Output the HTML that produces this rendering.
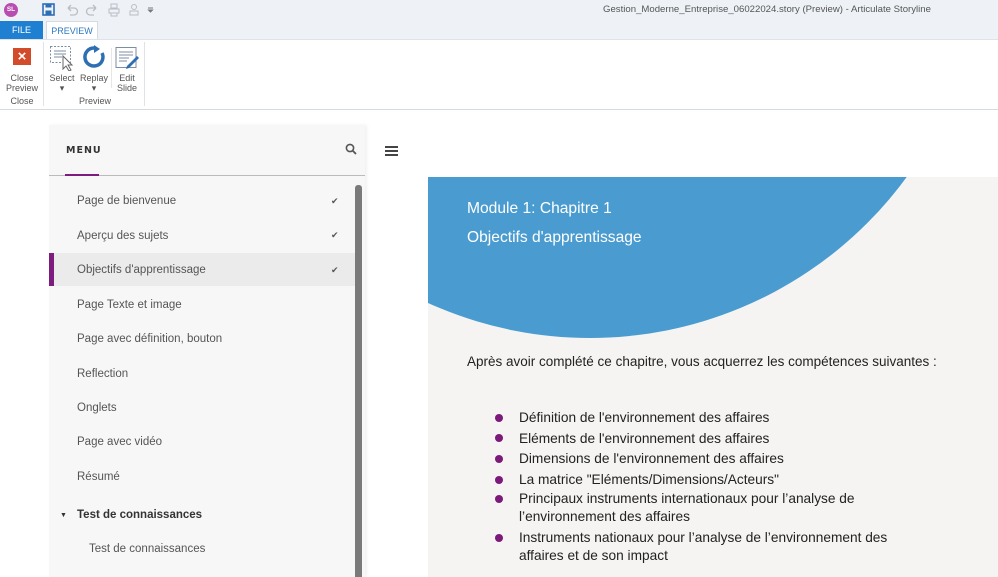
<!DOCTYPE html>
<html><head><meta charset="utf-8">
<style>
*{margin:0;padding:0;box-sizing:border-box}
body{width:998px;height:577px;overflow:hidden;background:#fff;font-family:"Liberation Sans",sans-serif;position:relative}
.a{position:absolute}
.title{left:0;top:0;width:998px;height:20px;background:#eef2f6}
.tabs{left:0;top:20px;width:998px;height:19px;background:#eef2f6}
.rib{left:0;top:39px;width:998px;height:71px;background:#fff;border-top:1px solid #dde3ea;border-bottom:1px solid #d6dbe0}
.rt{font-size:9px;color:#555;text-align:center;line-height:10px}
.mi{position:absolute;left:77px;font-size:11.5px;color:#555;font-family:"Liberation Sans",sans-serif;margin-top:2px}
.ck{position:absolute;left:331px;font-size:9px;color:#555;margin-top:1px}
.bl{position:absolute;left:519px;font-size:13.7px;color:#222;line-height:18px;margin-top:1px}
.dot{position:absolute;left:495px;width:8px;height:8px;border-radius:50%;background:#7b1a7b;margin-top:1px}
</style></head><body>
<div class="a title"></div>
<div class="a" style="left:4px;top:3px;width:14px;height:14px;border-radius:50%;background:#b84fb0;color:#fff;font-size:6.5px;line-height:14px;text-align:center;font-weight:bold">SL</div>
<svg class="a" style="left:42px;top:3px" width="115" height="14">
<rect x="1" y="1" width="11" height="11" fill="none" stroke="#2c6fb5" stroke-width="1.6"/><rect x="3.5" y="1" width="6" height="3.5" fill="#2c6fb5"/><rect x="3.5" y="7.5" width="6" height="4" fill="#2c6fb5"/>
<path d="M26 5 h6 a3.5 3.5 0 0 1 0 7 h-4 M26 5 l3-3 M26 5 l3 3" fill="none" stroke="#b9bec5" stroke-width="1.3"/>
<path d="M54 5 h-6 a3.5 3.5 0 0 0 0 7 h4 M54 5 l-3-3 M54 5 l-3 3" fill="none" stroke="#b9bec5" stroke-width="1.3"/>
<rect x="69" y="1" width="6" height="4" fill="none" stroke="#b9bec5"/><rect x="67" y="6" width="10" height="4" fill="none" stroke="#b9bec5"/><rect x="69" y="10" width="6" height="3" fill="none" stroke="#b9bec5"/>
<circle cx="92" cy="4" r="2.5" fill="none" stroke="#b9bec5"/><rect x="88" y="8" width="8" height="4" fill="none" stroke="#b9bec5"/>
<path d="M106 5 h5 M106.5 7 l2 2 2-2z" stroke="#777" fill="#777"/>
</svg>
<div class="a" style="left:603px;top:4px;font-size:9.6px;color:#555;font-family:'Liberation Sans',sans-serif">Gestion_Moderne_Entreprise_06022024.story (Preview) -  Articulate Storyline</div>
<div class="a tabs"></div>
<div class="a" style="left:0;top:21px;width:43px;height:18px;background:#1f80d2;color:#fff;font-size:9px;line-height:18px;text-align:center">FILE</div>
<div class="a" style="left:46px;top:21px;width:52px;height:19px;background:#fff;border:1px solid #d6dbe0;border-bottom:none;color:#2b79c2;font-size:9px;line-height:18px;text-align:center">PREVIEW</div>
<div class="a rib"></div>
<div class="a" style="left:43px;top:42px;width:1px;height:64px;background:#e0e3e6"></div>
<div class="a" style="left:144px;top:42px;width:1px;height:64px;background:#e0e3e6"></div>
<div class="a" style="left:111px;top:48px;width:1px;height:40px;background:#e6e6e6"></div>
<div class="a" style="left:13px;top:48px;width:18px;height:17px;background:#d24b2a;color:#fff;font-size:15px;line-height:17px;text-align:center;font-weight:bold">×</div>
<div class="a rt" style="left:3px;top:73px;width:38px">Close<br>Preview</div>
<div class="a rt" style="left:3px;top:96px;width:38px">Close</div>
<svg class="a" style="left:49px;top:45px" width="28" height="26"><rect x="1.5" y="1.5" width="20" height="16" fill="none" stroke="#7c8ea3" stroke-dasharray="2 1.5"/><path d="M5 6h12M5 9h12M5 12h8" stroke="#7c8ea3"/><path d="M14 11 v13 l3-3 3 5 2-1-3-5 4 0z" fill="#fff" stroke="#666"/></svg>
<div class="a rt" style="left:48px;top:73px;width:28px">Select<br>▾</div>
<svg class="a" style="left:82px;top:45px" width="24" height="24"><path d="M12 3 A9 9 0 1 0 20 8" fill="none" stroke="#2e6fb2" stroke-width="3.5"/><path d="M12 0 l6 4 -6 4z" fill="#2e6fb2"/></svg>
<div class="a rt" style="left:78px;top:73px;width:32px">Replay<br>▾</div>
<svg class="a" style="left:114px;top:46px" width="26" height="24"><rect x="2" y="1.5" width="20" height="20" fill="#fff" stroke="#7c8ea3"/><path d="M5 6h14M5 9h14M5 12h10M5 15h8" stroke="#7c8ea3"/><path d="M13 20 l10-10 2 2-10 10-3 1z" fill="#2e6fb2"/></svg>
<div class="a rt" style="left:112px;top:73px;width:30px">Edit<br>Slide</div>
<div class="a rt" style="left:60px;top:96px;width:70px">Preview</div>

<div class="a" style="left:49px;top:125px;width:316px;height:452px;background:#f7f7f7;box-shadow:2px 0 3px rgba(0,0,0,0.06)"></div>
<div class="a" style="left:66px;top:145px;font-size:9.5px;letter-spacing:1px;color:#333;font-weight:bold;font-family:'DejaVu Sans',sans-serif">MENU</div>
<svg class="a" style="left:345px;top:143px" width="12" height="12"><circle cx="5" cy="5" r="3.6" fill="none" stroke="#555" stroke-width="1.6"/><path d="M7.5 7.5 L11 11" stroke="#555" stroke-width="1.8"/></svg>
<div class="a" style="left:49px;top:175px;width:316px;height:1px;background:#bbb"></div>
<div class="a" style="left:65px;top:174px;width:34px;height:2px;background:#7d1b7e"></div>
<div class="a" style="left:49px;top:253px;width:306px;height:33px;background:#ebebeb"></div>
<div class="a" style="left:49px;top:253px;width:5px;height:33px;background:#7d1b7e"></div>
<div class="a" style="left:355px;top:185px;width:7px;height:392px;background:#7a7a7a;border-radius:3px 3px 0 0"></div>
<div class="mi" style="top:193px">Page de bienvenue</div><div class="ck" style="top:195px">✔</div>
<div class="mi" style="top:228px">Aperçu des sujets</div><div class="ck" style="top:229px">✔</div>
<div class="mi" style="top:262px">Objectifs d'apprentissage</div><div class="ck" style="top:264px">✔</div>
<div class="mi" style="top:297px">Page Texte et image</div>
<div class="mi" style="top:331px">Page avec définition, bouton</div>
<div class="mi" style="top:366px">Reflection</div>
<div class="mi" style="top:400px">Onglets</div>
<div class="mi" style="top:434px">Page avec vidéo</div>
<div class="mi" style="top:469px">Résumé</div>
<div class="a" style="left:60px;top:512px;font-size:7px;color:#333">▼</div>
<div class="mi" style="top:507px;font-weight:bold;color:#333">Test de connaissances</div>
<div class="mi" style="top:541px;left:89px">Test de connaissances</div>

<div class="a" style="left:385px;top:146px;width:13px;height:2px;background:#444"></div>
<div class="a" style="left:385px;top:150px;width:13px;height:2px;background:#444"></div>
<div class="a" style="left:385px;top:154px;width:13px;height:2px;background:#444"></div>

<div class="a" style="left:428px;top:177px;width:570px;height:400px;background:#f5f4f2;overflow:hidden">
<div class="a" style="left:-230px;top:-623px;width:784px;height:784px;border-radius:50%;background:#4a9cd0"></div>
</div>
<div class="a" style="left:467px;top:200px;font-size:15.6px;color:#fff">Module 1: Chapitre 1</div>
<div class="a" style="left:467px;top:229px;font-size:15.6px;color:#fff">Objectifs d'apprentissage</div>
<div class="a" style="left:467px;top:354px;font-size:13.5px;color:#222">Après avoir complété ce chapitre, vous acquerrez les compétences suivantes :</div>
<div class="dot" style="top:413px"></div><div class="bl" style="top:408px">Définition de l'environnement des affaires</div>
<div class="dot" style="top:433px"></div><div class="bl" style="top:429px">Eléments de l'environnement des affaires</div>
<div class="dot" style="top:454px"></div><div class="bl" style="top:449px">Dimensions de l'environnement des affaires</div>
<div class="dot" style="top:475px"></div><div class="bl" style="top:470px">La matrice "Eléments/Dimensions/Acteurs"</div>
<div class="dot" style="top:494px"></div><div class="bl" style="top:489px">Principaux instruments internationaux pour l’analyse de<br>l’environnement des affaires</div>
<div class="dot" style="top:533px"></div><div class="bl" style="top:528px">Instruments nationaux pour l’analyse de l’environnement des<br>affaires et de son impact</div>
</body></html>
